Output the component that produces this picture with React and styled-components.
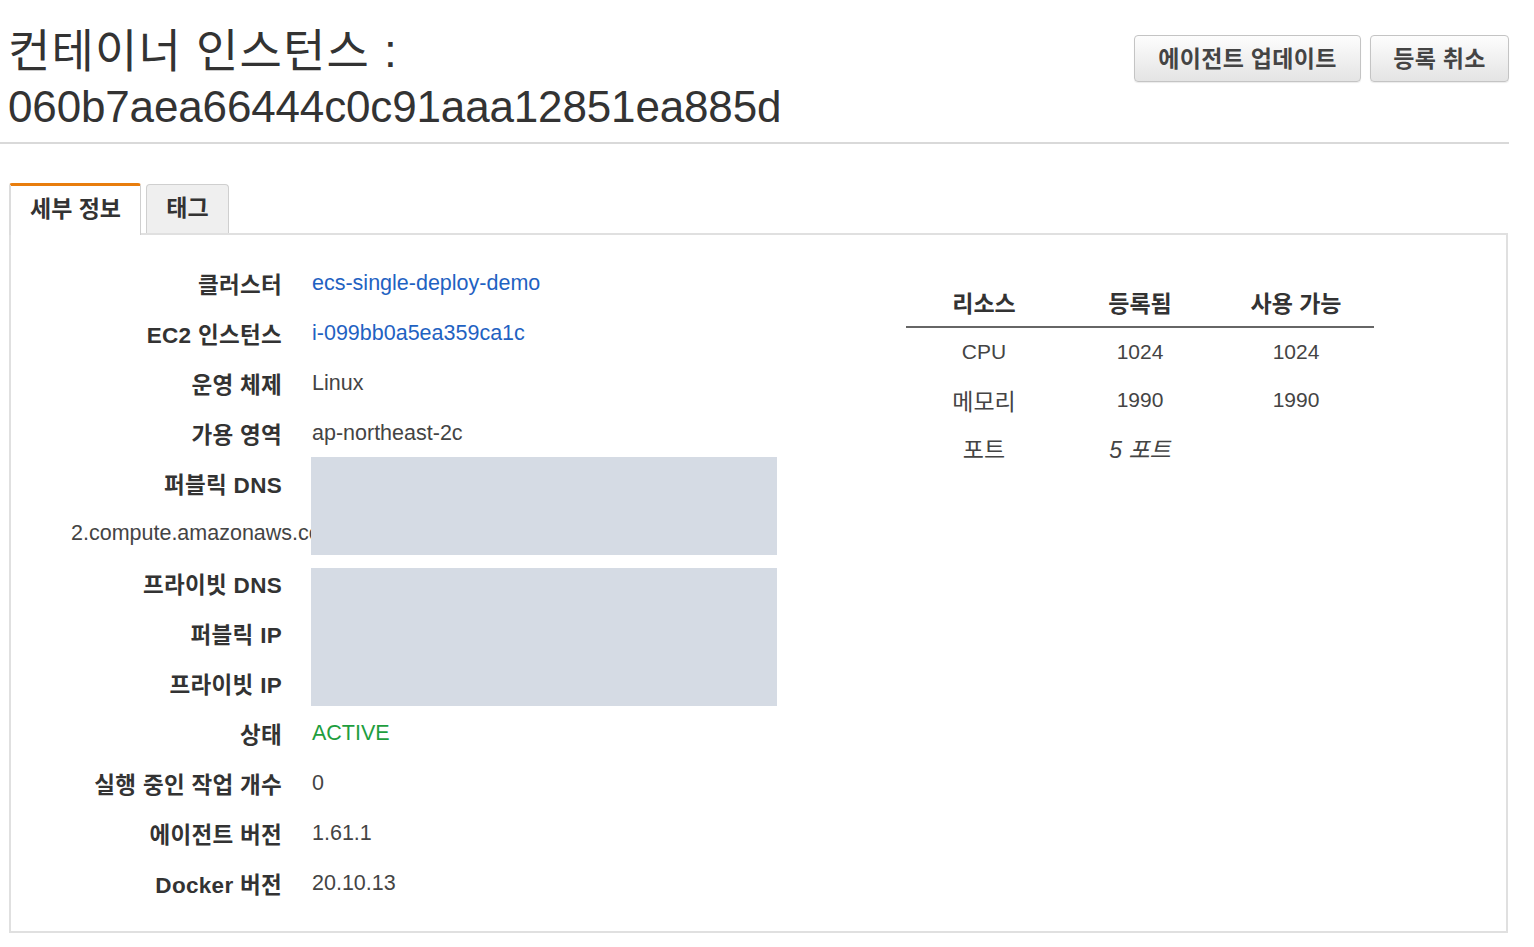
import React from 'react'
import styled, { createGlobalStyle } from 'styled-components'

const GlobalStyle = createGlobalStyle`
  body {
    margin: 0;
    background: #fff;
    font-family: "Liberation Sans", Arial, "Noto Sans CJK KR", sans-serif;
    color: #333;
  }
`

// Korean strings kept as escapes so the file stays plain ASCII
const t = {
  title: '\uCEE8\uD14C\uC774\uB108 \uC778\uC2A4\uD134\uC2A4 :',
  updateAgent: '\uC5D0\uC774\uC804\uD2B8 \uC5C5\uB370\uC774\uD2B8',
  deregister: '\uB4F1\uB85D \uCDE8\uC18C',
  details: '\uC138\uBD80 \uC815\uBCF4',
  tags: '\uD0DC\uADF8',
  resource: '\uB9AC\uC18C\uC2A4',
  registered: '\uB4F1\uB85D\uB428',
  available: '\uC0AC\uC6A9 \uAC00\uB2A5',
}

const details = [
  { label: '\uD074\uB7EC\uC2A4\uD130', value: 'ecs-single-deploy-demo', kind: 'link' },
  { label: 'EC2 \uC778\uC2A4\uD134\uC2A4', value: 'i-099bb0a5ea359ca1c', kind: 'link' },
  { label: '\uC6B4\uC601 \uCCB4\uC81C', value: 'Linux' },
  { label: '\uAC00\uC6A9 \uC601\uC5ED', value: 'ap-northeast-2c' },
  { label: '\uD37C\uBE14\uB9AD DNS', value: '' },
  { overflow: '2.compute.amazonaws.com' },
  { label: '\uD504\uB77C\uC774\uBE57 DNS', value: '' },
  { label: '\uD37C\uBE14\uB9AD IP', value: '' },
  { label: '\uD504\uB77C\uC774\uBE57 IP', value: '' },
  { label: '\uC0C1\uD0DC', value: 'ACTIVE', kind: 'ok' },
  { label: '\uC2E4\uD589 \uC911\uC778 \uC791\uC5C5 \uAC1C\uC218', value: '0' },
  { label: '\uC5D0\uC774\uC804\uD2B8 \uBC84\uC804', value: '1.61.1' },
  { label: 'Docker \uBC84\uC804', value: '20.10.13' },
]

const resources = [
  { name: 'CPU', registered: '1024', available: '1024' },
  { name: '\uBA54\uBAA8\uB9AC', registered: '1990', available: '1990', hangul: true },
  { name: '\uD3EC\uD2B8', registered: '5 \uD3EC\uD2B8', available: '', italic: true, hangul: true },
]

function App() {
  return (
    <Page>
      <GlobalStyle />
      <Header>
        <Title>
          <TitleText>{t.title}</TitleText>
          <InstanceId>060b7aea66444c0c91aaa12851ea885d</InstanceId>
        </Title>
        <Actions>
          <Button $width={227}>{t.updateAgent}</Button>
          <Button $width={139}>{t.deregister}</Button>
        </Actions>
      </Header>

      <Tabs>
        <Tab $active>{t.details}</Tab>
        <Tab>{t.tags}</Tab>
      </Tabs>

      <Panel>
        <Details>
          {details.map((row, i) =>
            row.overflow ? (
              <OverflowText key={i}>{row.overflow}</OverflowText>
            ) : (
              <React.Fragment key={i}>
                <Label>{row.label}</Label>
                <Value $kind={row.kind}>{row.value}</Value>
              </React.Fragment>
            )
          )}
          <Redaction $top={199} $height={98} />
          <Redaction $top={310} $height={138} />
        </Details>

        <ResourceTable>
          <thead>
            <tr>
              <Th>{t.resource}</Th>
              <Th>{t.registered}</Th>
              <Th>{t.available}</Th>
            </tr>
          </thead>
          <tbody>
            {resources.map(r => (
              <tr key={r.name}>
                <Td $hangul={r.hangul}>{r.name}</Td>
                <Td $hangul={r.italic} $italic={r.italic}>{r.registered}</Td>
                <Td>{r.available}</Td>
              </tr>
            ))}
          </tbody>
        </ResourceTable>
      </Panel>
    </Page>
  )
}

const Page = styled.div`
  width: 1509px;
`

const Header = styled.header`
  display: flex;
  justify-content: space-between;
  align-items: flex-start;
  padding: 24px 0 8px 8px;
  border-bottom: 2px solid #d9d9d9;
`

const Title = styled.h1`
  margin: 0;
  font-size: 44px;
  line-height: 55px;
  font-weight: normal;
  color: #333;
`

const TitleText = styled.span`
  display: block;
  font-size: 46px;
  letter-spacing: 1.2px;
`

const InstanceId = styled.span`
  display: block;
  letter-spacing: -0.15px;
`

const Actions = styled.div`
  display: flex;
  gap: 9px;
  margin-top: 11px;
`

const Button = styled.button`
  width: ${p => p.$width}px;
  height: 47px;
  padding: 0 0 3px;
  border: 1px solid #c4c4c4;
  border-radius: 4px;
  background: linear-gradient(#fdfdfd, #e4e4e4);
  box-shadow: 0 1px 1px rgba(0, 0, 0, 0.08);
  font-family: inherit;
  font-size: 23px;
  font-weight: bold;
  letter-spacing: 0.3px;
  color: #444;
  cursor: pointer;
`

const Tabs = styled.div`
  display: flex;
  align-items: flex-end;
  gap: 5px;
  margin: 39px 0 -2px 9px;
  position: relative;
  z-index: 1;
`

const Tab = styled.div`
  box-sizing: border-box;
  display: flex;
  align-items: center;
  justify-content: center;
  font-size: 23px;
  font-weight: bold;
  color: #333;
  ${p =>
    p.$active
      ? `
    width: 132px;
    height: 52px;
    padding-bottom: 8px;
    background: #fff;
    border-top: 3px solid #e87d0d;
    border-left: 2px solid #dcdcdc;
    border-right: 1px solid #cfcfcf;
    border-radius: 3px 3px 0 0;
  `
      : `
    width: 83px;
    height: 49px;
    padding-bottom: 6px;
    margin-bottom: 2px;
    background: #efefef;
    border: 1px solid #cfcfcf;
    border-bottom: none;
    border-radius: 4px 4px 0 0;
  `}
`

const Panel = styled.section`
  box-sizing: border-box;
  display: flex;
  align-items: flex-start;
  width: 1499px;
  margin-left: 9px;
  padding: 23px 0;
  border: 2px solid #e0e0e0;
`

const Details = styled.div`
  position: relative;
  width: 895px;
  display: grid;
  grid-template-columns: 271px 1fr;
  grid-auto-rows: 50px;
  column-gap: 30px;
  align-items: center;
`

const Label = styled.div`
  text-align: right;
  font-size: 22.5px;
  letter-spacing: 0.3px;
  font-weight: bold;
  color: #333;
  white-space: nowrap;
`

const Value = styled.div`
  font-size: 21.5px;
  white-space: nowrap;
  color: ${p => (p.$kind === 'link' ? '#1f62c2' : p.$kind === 'ok' ? '#1e9e3e' : '#444')};
`

const OverflowText = styled.div`
  grid-column: 1 / span 2;
  padding-left: 60px;
  font-size: 21.5px;
  color: #444;
  white-space: nowrap;
`

const Redaction = styled.div`
  position: absolute;
  left: 300px;
  top: ${p => p.$top}px;
  width: 466px;
  height: ${p => p.$height}px;
  background: #d5dbe4;
`

const ResourceTable = styled.table`
  width: 468px;
  margin-top: 20px;
  border-collapse: collapse;
  table-layout: fixed;
`

const Th = styled.th`
  height: 48px;
  border-bottom: 2px solid #666;
  font-size: 23px;
  font-weight: bold;
  color: #333;
  text-align: center;
  padding: 0;
`

const Td = styled.td`
  height: 48px;
  padding: 0;
  font-size: ${p => (p.$hangul ? '23px' : '21px')};
  color: #444;
  text-align: center;
  font-style: ${p => (p.$italic ? 'italic' : 'normal')};
`

export default App
